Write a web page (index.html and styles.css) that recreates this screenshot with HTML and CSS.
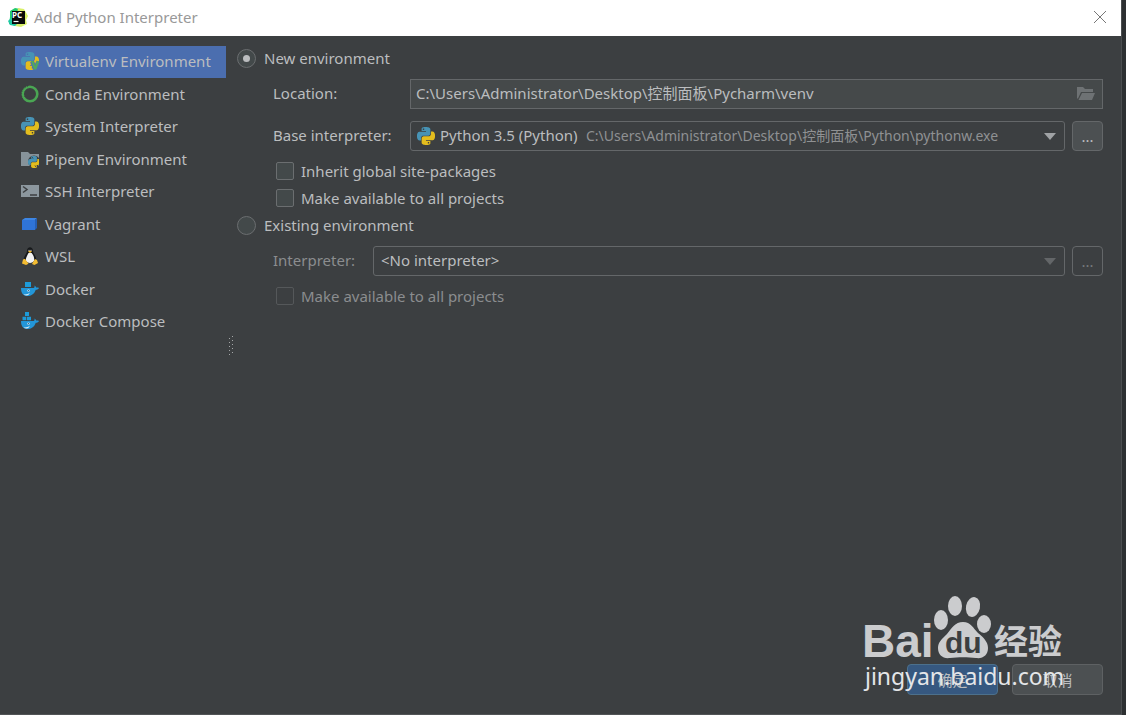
FILE: index.html
```
<!DOCTYPE html>
<html lang="en">

<head>
  <meta charset="UTF-8">
  <meta name="viewport" content="width=device-width, initial-scale=1.0">
  <title>Add Python Interpreter</title>
  <link rel="stylesheet" href="styles.css">
</head>

<body>
  <!-- Shared icon shapes -->
  <svg class="defs" aria-hidden="true">
    <symbol id="python" viewBox="0 0 24 24">
      <path fill="#4793b5" d="M14.25.18l.9.2.73.26.59.3.45.32.34.34.25.34.16.33.1.3.04.26.02.2-.01.13V8.5l-.05.63-.13.55-.21.46-.26.38-.3.31-.33.25-.35.19-.35.14-.33.1-.3.07-.26.04-.21.02H8.77l-.69.05-.59.14-.5.22-.41.27-.33.32-.27.35-.2.36-.15.37-.1.35-.07.32-.04.27-.02.21v3.06H3.17l-.21-.03-.28-.07-.32-.12-.35-.18-.36-.26-.36-.36-.35-.46-.32-.59-.28-.73-.21-.88-.14-1.05-.05-1.23.06-1.22.16-1.04.24-.87.32-.71.36-.57.4-.44.42-.33.42-.24.4-.16.36-.1.32-.05.24-.01h.16l.06.01h8.16v-.83H6.18l-.01-2.75-.02-.37.05-.34.11-.31.17-.28.25-.26.31-.23.38-.2.44-.18.51-.15.58-.12.64-.1.71-.06.77-.04.84-.02 1.27.05zm-6.3 1.98l-.23.33-.08.41.08.41.23.34.33.22.41.09.41-.09.33-.22.23-.34.08-.41-.08-.41-.23-.33-.33-.22-.41-.09-.41.09z"/>
      <path fill="#e3bd1e" d="M21.04 6.11l.28.06.32.12.35.18.36.27.36.35.35.47.32.59.28.73.21.88.14 1.04.05 1.23-.06 1.23-.16 1.04-.24.86-.32.71-.36.57-.4.45-.42.33-.42.24-.4.16-.36.09-.32.05-.24.02-.16-.01h-8.22v.82h5.84l.01 2.76.02.36-.05.34-.11.31-.17.29-.25.25-.31.24-.38.2-.44.17-.51.15-.58.13-.64.09-.71.07-.77.04-.84.01-1.27-.04-1.07-.14-.9-.2-.73-.25-.59-.3-.45-.33-.34-.34-.25-.34-.16-.33-.1-.3-.04-.25-.02-.2.01-.13v-5.34l.05-.64.13-.54.21-.46.26-.38.3-.32.33-.24.35-.2.35-.14.33-.1.3-.06.26-.04.21-.02.13-.01h5.84l.69-.05.59-.14.5-.21.41-.28.33-.32.27-.35.2-.36.15-.36.1-.35.07-.32.04-.28.02-.21V6.07h2.09l.14.01zm-6.47 14.25l-.23.33-.08.41.08.41.23.33.33.23.41.08.41-.08.33-.23.23-.33.08-.41-.08-.41-.23-.33-.33-.23-.41-.08-.41.08z"/>
    </symbol>
    <symbol id="whale" viewBox="0 0 18 18">
      <path fill="#2396d8" d="M0 8h12.600c.9-.3 1.200-1.200.9-2.500 1 .5 1.500 1.200 1.600 2 1-.2 2-.1 2.900.4-.5 1.200-1.600 1.800-3.200 1.800C13.200 14.200 10 16 6.300 16 2.200 16 0 13.200 0 8z"/>
      <path fill="#d5eaf5" d="M2.500 14.300c2.500.3 4.700-.2 6.200-1.600-.5 1.900-1.500 2.700-3.200 2.800-1.200 0-2.200-.4-3-1.200z"/>
      <circle cx="7.500" cy="10.600" r="1.200" fill="#d5eaf5"/>
      <circle cx="7.500" cy="10.600" r=".6" fill="#29516d"/>
    </symbol>
    <symbol id="arrow" viewBox="0 0 12 8">
      <path fill="currentColor" d="M0 1h12L6 8z"/>
    </symbol>
  </svg>

  <div class="dialog">
    <header class="titlebar">
      <svg class="app-icon" viewBox="0 0 20 20">
        <path fill="#22c96d" d="M2 4l5-3 5 1 2 4v12l-6 1-7-2 1-7z"/>
        <path fill="#d9f06a" d="M10 1l6 1 4 7-2 4 1 4-6 3-6-1z"/>
        <path fill="#20c9a5" d="M0 14l3-3 6 6-2 2-5-1z"/>
        <rect x="4" y="4" width="13" height="13" fill="#090909"/>
        <text x="4" y="11" class="app-icon-text">PC</text>
        <path stroke="#fff" stroke-width="1.200" d="M5.500 14.500h5"/>
      </svg>
      <h1>Add Python Interpreter</h1>
      <button class="close" type="button" aria-label="Close">
        <svg viewBox="0 0 14 14"><path fill="none" stroke="#777" d="M1 1l12 12M13 1L1 13"/></svg>
      </button>
    </header>

    <main class="content">
      <!-- Environment types -->
      <nav class="sidebar">
        <ul>
          <li><a href="#virtualenv" class="active">
            <svg viewBox="0 0 18 18"><use href="#python" width="18" height="18"/><path fill="none" stroke="#4b74b3" stroke-width="4" d="M11 9.500l3 7 3.500-7"/><path fill="#53a85b" d="M10 9h2.500l1.700 5L16 9h2.500l-3.300 8.500h-2z"/></svg>
            Virtualenv Environment</a></li>
          <li><a href="#conda">
            <svg viewBox="0 0 18 18"><circle cx="9" cy="9" r="7.300" fill="none" stroke="#4aa653" stroke-width="2.600"/><path fill="none" stroke="#3c3f41" stroke-width="1" stroke-dasharray="1 1.500" d="M1.800 14A8.600 8.600 0 0 1 7.500 1M4 12a6 6 0 0 1 3-8"/></svg>
            Conda Environment</a></li>
          <li><a href="#system">
            <svg viewBox="0 0 18 18"><use href="#python" width="18" height="18"/></svg>
            System Interpreter</a></li>
          <li><a href="#pipenv">
            <svg viewBox="0 0 18 18"><path fill="#87939a" d="M0 2h7l2 2h9v12H0z"/><circle cx="13" cy="11.500" r="6" fill="#3c3f41"/><use href="#python" x="7" y="6" width="12" height="12"/></svg>
            Pipenv Environment</a></li>
          <li><a href="#ssh">
            <svg viewBox="0 0 18 18"><path fill="#8c979e" d="M0 3h18v12H0z"/><path fill="none" stroke="#3c3f41" stroke-width="1.500" d="M2 4.500l4 3-4 3M9 13h7"/></svg>
            SSH Interpreter</a></li>
          <li><a href="#vagrant">
            <svg viewBox="0 0 18 18"><path fill="#3d86e4" d="M1 5l3-2h12l-2 2z"/><path fill="#2f74d8" d="M1 5h13v10H1z"/><path fill="#255fb5" d="M14 5l2-2v10l-2 2z"/></svg>
            Vagrant</a></li>
          <li><a href="#wsl">
            <svg viewBox="0 0 18 18"><path fill="#17191b" d="M6 4c0-5 6-5 6 0 0 3 4 5 3 10l-3 2H6l-3-2C2 9 6 7 6 4z"/><path fill="#f2f2f2" d="M7.500 6h3.200c2 3 3 5 2.300 8-1.500 2.500-6.500 2.500-8 0C4.500 11 6 9 7.500 6z"/><path fill="#f4bd32" d="M7 4.500l2-1 2 1-2 1.500zM2 12.500l2-.8 3.500 5L5 18l-4-1.500zM14 12l2 1 1 3-3.500 2-2.500-1z"/><circle cx="8" cy="3.300" r=".6" fill="#ddd"/><circle cx="10" cy="3.300" r=".6" fill="#ddd"/></svg>
            WSL</a></li>
          <li><a href="#docker">
            <svg viewBox="0 0 18 18"><use href="#whale" width="18" height="18"/><path fill="#1d9bd9" d="M4 2h6v5H4z"/></svg>
            Docker</a></li>
          <li><a href="#compose">
            <svg viewBox="0 0 18 18"><use href="#whale" y="1" width="18" height="18"/><path fill="#1d9bd9" d="M4 0h4v4H4zM1.500 4.700h3.800v3.600H1.500zM6 4.700h4v3.600H6z"/></svg>
            Docker Compose</a></li>
        </ul>
      </nav>

      <div class="splitter">
        <svg viewBox="0 0 6 20"><path fill="none" stroke="#a5a7a8" stroke-dasharray="1 3" d="M1.500 2v18M4.500 0v20"/></svg>
      </div>

      <!-- Interpreter settings -->
      <form class="settings" id="settings">
        <label class="radio"><input type="radio" name="env" checked> New environment</label>

        <div class="row new-row">
          <label for="location">Location:</label>
          <div class="path-field">
            <input type="text" id="location" value="C:\Users\Administrator\Desktop\控制面板\Pycharm\venv">
            <button class="browse" type="button" aria-label="Browse">
              <svg viewBox="0 0 20 16"><path fill="#6e7274" d="M1 1h6l2 2h8v3H5l-3 6.500H1zM6 7h13l-3 7H2.500z"/></svg>
            </button>
          </div>
        </div>

        <div class="row new-row">
          <label for="base">Base interpreter:</label>
          <div class="combo">
            <svg class="combo-icon"><use href="#python"/></svg>
            <select id="base">
              <option>Python 3.5 (Python)</option>
            </select>
            <span class="combo-path">C:\Users\Administrator\Desktop\控制面板\Python\pythonw.exe</span>
            <svg class="arrow"><use href="#arrow"/></svg>
          </div>
          <button class="more" type="button">...</button>
        </div>

        <label class="check"><input type="checkbox"> Inherit global site-packages</label>
        <label class="check"><input type="checkbox"> Make available to all projects</label>

        <label class="radio"><input type="radio" name="env"> Existing environment</label>

        <div class="row old-row">
          <label for="interpreter" class="muted">Interpreter:</label>
          <div class="combo off">
            <select id="interpreter" disabled>
              <option>&lt;No interpreter&gt;</option>
            </select>
            <svg class="arrow"><use href="#arrow"/></svg>
          </div>
          <button class="more" type="button" disabled>...</button>
        </div>

        <label class="check muted"><input type="checkbox" disabled> Make available to all projects</label>
      </form>
    </main>

    <footer class="actions">
      <button class="primary" type="submit" form="settings">确定</button>
      <button type="button">取消</button>
    </footer>

    <!-- Watermark over the lower right corner -->
    <div class="watermark">
      <svg viewBox="0 0 200 64">
        <g fill="#cbccce">
          <ellipse cx="76" cy="24" rx="7" ry="10"/>
          <ellipse cx="90" cy="10" rx="7" ry="10"/>
          <ellipse cx="108" cy="11" rx="7" ry="10" transform="rotate(12 108 11)"/>
          <ellipse cx="119" cy="28" rx="7" ry="9"/>
          <path d="M98 26c8 0 10 6 15 11 6 5 10 9 10 15 0 7-5 11-12 10-8-1-18-1-26 0-7 1-12-3-12-10 0-6 4-9 9-14 5-6 8-12 16-12z"/>
          <text x="-3" y="61" class="mark-bai">Bai</text>
          <text x="129" y="58" class="mark-cn">经验</text>
        </g>
        <text x="80" y="57" class="mark-du">du</text>
      </svg>
      <span>jingyan.baidu.com</span>
    </div>
  </div>
</body>

</html>
```
FILE: styles.css
```
* {
  box-sizing: border-box;
}

body {
  margin: 0;
  padding-right: 4px;
  background-color: #2d3032;
  color: #bbbdbf;
  font-family: "Noto Sans", "Noto Sans CJK SC", sans-serif;
  font-size: 15px;
  line-height: 20px;
}

input,
select,
button {
  margin: 0;
  color: inherit;
  font: inherit;
}

.defs {
  position: absolute;
  width: 0;
  height: 0;
}

.dialog {
  position: relative;
  display: flex;
  flex-direction: column;
  min-height: 100vh;
  background-color: #3c3f41;
  border-right: 1px solid #4b4e50;
  border-bottom: 1px solid #515456;
}

/* Title bar */
.titlebar {
  display: flex;
  align-items: center;
  height: 36px;
  padding: 0 12px 2px 8px;
  background-color: #fff;
  color: #999;
}

.app-icon {
  width: 20px;
  height: 20px;
  margin-right: 6px;
}

.app-icon-text {
  fill: #fff;
  font-size: 8px;
  font-weight: bold;
}

h1 {
  flex: 1;
  margin: 0;
  font-size: 15px;
  font-weight: normal;
}

.close {
  display: flex;
  padding: 2px;
  background: none;
  border: none;
}

.close svg {
  width: 14px;
  height: 14px;
}

/* Main area */
.content {
  display: flex;
  flex: 1;
  padding: 10px 18px 0 15px;
}

.sidebar {
  width: 211px;
}

.sidebar ul {
  margin: 0;
  padding: 0;
  list-style: none;
}

.sidebar li:nth-child(odd) {
  margin-bottom: 1px;
}

.sidebar a {
  display: flex;
  align-items: center;
  gap: 6px;
  height: 32px;
  padding: 0 0 2px 6px;
  color: inherit;
  text-decoration: none;
}

.sidebar a.active {
  background-color: #4b6eaf;
}

.sidebar svg {
  width: 18px;
  height: 18px;
}

.splitter {
  width: 11px;
  padding: 290px 0 0 2px;
}

.splitter svg {
  display: block;
  width: 6px;
  height: 20px;
}

/* Settings form */
.settings {
  flex: 1;
  padding-top: 2px;
}

.radio,
.check {
  display: flex;
  align-items: center;
  gap: 8px;
  height: 20px;
}

.check {
  gap: 7px;
  margin-bottom: 7px;
  padding-left: 39px;
}

.radio input,
.check input {
  display: grid;
  place-content: center;
  width: 18px;
  height: 18px;
  appearance: none;
  background-color: #43494a;
  border: 1px solid #6b6e70;
  border-radius: 2px;
}

.radio input {
  width: 19px;
  height: 19px;
  border-radius: 50%;
}

.radio input:checked::before {
  width: 7px;
  height: 7px;
  background-color: #bbbdbf;
  border-radius: 50%;
  content: "";
}

.check input:disabled {
  background-color: #3c3f41;
  border-color: #55585a;
}

.row {
  display: flex;
  align-items: center;
  margin: 11px 0 12px;
  padding-left: 36px;
}

.row > label {
  padding-bottom: 2px;
}

.new-row > label {
  width: 137px;
}

.old-row > label {
  width: 100px;
}

.new-row + .new-row,
.old-row {
  margin-bottom: 10px;
}

.muted {
  color: #8b8d8f;
}

.path-field,
.combo {
  display: flex;
  flex: 1;
  align-items: center;
  height: 30px;
  border: 1px solid #646769;
}

.path-field {
  background-color: #45494a;
}

.path-field input {
  flex: 1;
  min-width: 0;
  padding: 0 5px 2px;
  background: none;
  border: none;
  outline: none;
}

.browse {
  display: flex;
  padding: 0 6px;
  background: none;
  border: none;
}

.browse svg {
  width: 20px;
  height: 16px;
}

.combo {
  padding: 0 8px 0 6px;
  border-radius: 3px;
}

.combo-icon {
  width: 18px;
  height: 18px;
  margin-right: 5px;
}

.combo select {
  padding: 0 0 2px;
  appearance: none;
  background: none;
  border: none;
  opacity: 1;
}

.combo.off select {
  flex: 1;
  padding-left: 1px;
}

.combo-path {
  flex: 1;
  margin-left: 8px;
  color: #8f9193;
  font-size: 14px;
}

.arrow {
  width: 12px;
  height: 8px;
  color: #a0a3a5;
}

.off .arrow {
  color: #636668;
}

.more {
  width: 31px;
  height: 30px;
  margin-left: 7px;
  padding: 0;
  background-color: #4c5052;
  border: 1px solid #646769;
  border-radius: 4px;
}

.more:disabled {
  background-color: #3c3f41;
  color: #777a7c;
}

/* Dialog buttons */
.actions {
  display: flex;
  justify-content: flex-end;
  gap: 14px;
  padding: 0 18px 19px;
}

.actions button {
  width: 91px;
  height: 31px;
  background-color: #4c5052;
  border: 1px solid #5e6163;
  border-radius: 4px;
}

.actions .primary {
  background-color: #365880;
  border-color: #4c708c;
}

/* Watermark */
.watermark {
  position: absolute;
  right: 56px;
  bottom: 22px;
  width: 200px;
  color: #e4e6e8;
  font-size: 23px;
  line-height: 32px;
  pointer-events: none;
}

.watermark svg {
  display: block;
  width: 200px;
  height: 64px;
  overflow: visible;
}

.mark-bai {
  font-family: "Liberation Sans", Arial, sans-serif;
  font-size: 46px;
  font-weight: bold;
}

.mark-cn {
  font-family: "Noto Sans CJK SC", sans-serif;
  font-size: 34px;
  font-weight: bold;
}

.mark-du {
  fill: #3c3f41;
  font-family: "Liberation Sans", Arial, sans-serif;
  font-size: 30px;
  font-weight: bold;
}
```
